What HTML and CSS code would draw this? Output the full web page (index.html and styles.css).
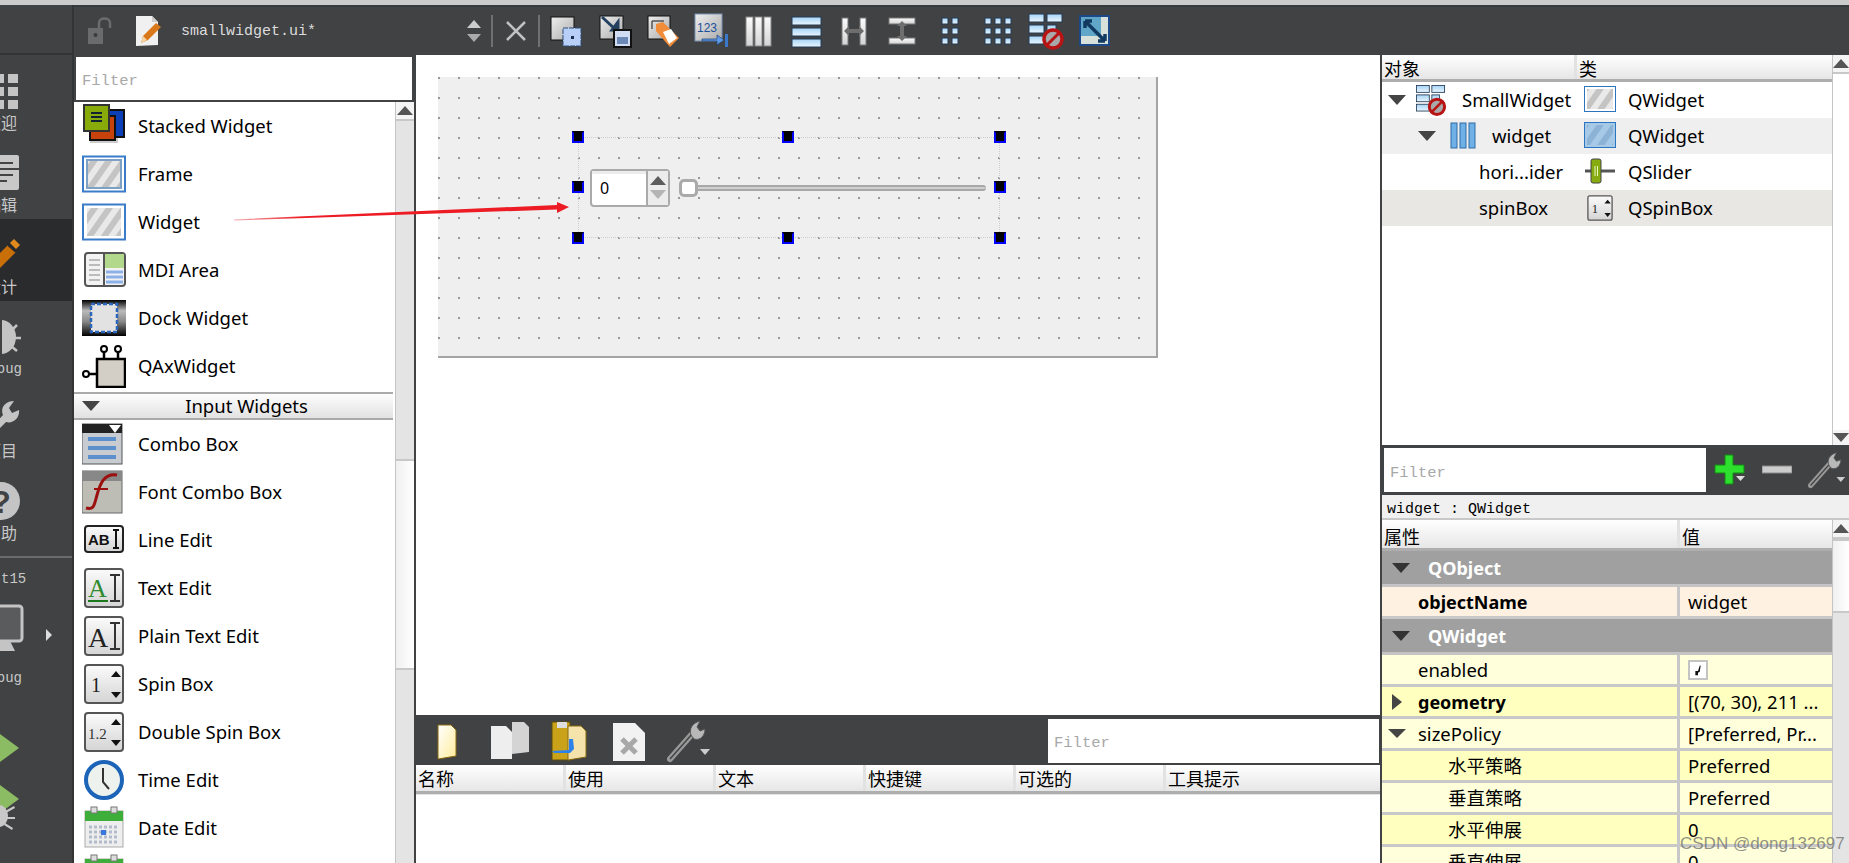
FILE: index.html
```html
<!DOCTYPE html>
<html lang="zh">
<head>
<meta charset="utf-8">
<title>smallwidget.ui - Qt Designer</title>
<link rel="stylesheet" href="styles.css">
</head>
<body>
<svg class="defs" width="0" height="0" aria-hidden="true">
  <defs>
    <pattern id="hatch" width="12" height="12" patternUnits="userSpaceOnUse" patternTransform="rotate(35)">
      <rect width="12" height="12" fill="#e9e9e9"/><rect width="6" height="12" fill="#c4c4c4"/>
    </pattern>
    <pattern id="hatchblue" width="12" height="12" patternUnits="userSpaceOnUse" patternTransform="rotate(35)">
      <rect width="12" height="12" fill="#a6c9e8"/><rect width="6" height="12" fill="#8cb3d6"/>
    </pattern>
    <linearGradient id="btn" x1="0" y1="0" x2="0" y2="1"><stop offset="0" stop-color="#fbfbfb"/><stop offset="1" stop-color="#d4d4d4"/></linearGradient>
    <linearGradient id="dockg" x1="0" y1="0" x2="0" y2="1"><stop offset="0" stop-color="#000"/><stop offset=".3" stop-color="#bbb"/><stop offset=".6" stop-color="#888"/><stop offset="1" stop-color="#000"/></linearGradient>
    <linearGradient id="barb" x1="0" y1="0" x2="0" y2="1"><stop offset="0" stop-color="#a6d4f6"/><stop offset="1" stop-color="#eaf6ff"/></linearGradient>
    <linearGradient id="gray" x1="0" y1="0" x2="1" y2="1"><stop offset="0" stop-color="#eee"/><stop offset="1" stop-color="#aaa"/></linearGradient>
    <linearGradient id="paper" x1="0" y1="0" x2="1" y2="1"><stop offset="0" stop-color="#fff"/><stop offset="1" stop-color="#ffec9c"/></linearGradient>
    <linearGradient id="redfade" x1="0" y1="0" x2="1" y2="0"><stop offset="0" stop-color="#f7b0b4"/><stop offset=".2" stop-color="#ed1c24"/></linearGradient>

    <symbol id="i-hatch-blue" viewBox="0 0 44 44"><rect x="1" y="4.500" width="42" height="35" fill="#fff" stroke="#3a7cc8" stroke-width="2"/><rect x="5" y="8" width="34" height="28" fill="url(#hatch)"/></symbol>
    <symbol id="i-spin" viewBox="0 0 44 44"><rect x="3" y="3" width="38" height="38" rx="3" fill="url(#btn)" stroke="#555" stroke-width="2"/><text x="9" y="30" class="svgserif" font-size="20" fill="#222">1</text><path d="M29 15l5-6 5 6zM29 30l5 6 5-6z" fill="#111"/></symbol>
    <symbol id="i-layoutbars" viewBox="0 0 40 40"><g fill="url(#barb)" stroke="#243a55"><rect x="6" y="6" width="29" height="8"/><rect x="6" y="17" width="29" height="8"/><rect x="6" y="28" width="29" height="8"/></g></symbol>
    <symbol id="i-wrench" viewBox="0 0 44 44"><path d="M3 40L26 14" stroke="#999" stroke-width="6" stroke-linecap="round"/><path d="M3 40L26 14" stroke="#444" stroke-width="1.500"/><path d="M24 16c-2-6 1-12 9-14l-3 6 3 4 5-2c0 7-5 12-11 10z" fill="#b8b8b8" stroke="#555"/><path d="M33 30h10l-5 6z" fill="#ccc"/></symbol>
    <symbol id="i-noform" viewBox="0 0 40 40"><g fill="url(#barb)" stroke="#243a55"><rect x="3" y="3" width="15" height="8"/><rect x="21" y="3" width="15" height="8"/><rect x="3" y="14" width="15" height="8"/><rect x="21" y="14" width="9" height="8"/><rect x="3" y="25" width="15" height="8"/></g><circle cx="27" cy="28" r="9" fill="#a9a9a9" stroke="#b81414" stroke-width="3.500"/><path d="M21 34L33 22" stroke="#b81414" stroke-width="3"/></symbol>
  </defs>
</svg>

<div class="topstrip"></div>
<div class="app">
  <nav class="modebar">
    <div class="modeinner">
      <div class="modetop"></div>
      <div class="mode">
        <svg class="modeicon" viewBox="0 0 40 40"><g fill="#c4c4c4"><rect x="1" y="3" width="9" height="9"/><rect x="14" y="3" width="9" height="9"/><rect x="27" y="3" width="10" height="9"/><rect x="1" y="16" width="9" height="9"/><rect x="14" y="16" width="9" height="9"/><rect x="27" y="16" width="10" height="9"/><rect x="1" y="29" width="9" height="9"/><rect x="14" y="29" width="9" height="9"/><rect x="27" y="29" width="10" height="9"/></g></svg>
        <span class="modelabel">欢迎</span>
      </div>
      <div class="mode">
        <svg class="modeicon" viewBox="0 0 40 40"><rect x="1" y="2" width="37" height="35" rx="2" fill="#c8c8c8"/><path d="M6 10h26M6 16h32M6 22h26M6 28h20" stroke="#444" stroke-width="2"/></svg>
        <span class="modelabel">编辑</span>
      </div>
      <div class="mode active">
        <svg class="modeicon" viewBox="0 0 40 40"><path d="M8 29L27 10l8 7-19 19-10 2z" fill="#c96f0a"/><path d="M29 8l4-4 6 6-4 4z" fill="#e08a1e"/><path d="M27 10l8 7" stroke="#2a2b2d" stroke-width="2"/></svg>
        <span class="modelabel">设计</span>
      </div>
      <div class="mode">
        <svg class="modeicon" viewBox="0 0 40 40"><ellipse cx="20" cy="20" rx="15" ry="17" fill="#c4c4c4"/><path d="M20 3v34" stroke="#404244" stroke-width="2"/><path d="M4 8l6 6M36 8l-6 6M0 21h6M40 21h-6M4 34l6-5M36 34l-6-5" stroke="#c4c4c4" stroke-width="2.500"/></svg>
        <span class="modelabel mono">Debug</span>
      </div>
      <div class="mode">
        <svg class="modeicon" viewBox="0 0 40 40"><path d="M2 38L22 16c-3-7 2-14 11-14l-5 7 3 5 7-3c1 8-6 14-13 12L8 40z" fill="#c4c4c4"/></svg>
        <span class="modelabel">项目</span>
      </div>
      <div class="mode">
        <svg class="modeicon" viewBox="0 0 40 40"><circle cx="20" cy="20" r="19" fill="#c4c4c4"/><text x="20" y="32" text-anchor="middle" class="svgsansb" font-size="32" fill="#404244">?</text></svg>
        <span class="modelabel">帮助</span>
      </div>
      <div class="modesep"></div>
      <div class="kit">
        <span class="modelabel mono kitname">test15</span>
        <svg class="kiticon" viewBox="0 0 46 48"><rect x="2" y="2" width="42" height="35" rx="3" fill="#5a5b5d" stroke="#c4c4c4" stroke-width="3"/><path d="M14 37h18l5 10H9z" fill="#c4c4c4"/></svg>
        <span class="modelabel mono">Debug</span>
      </div>
      <div class="runs">
        <svg class="runicon" viewBox="0 0 40 34"><path d="M15 0L38 17 15 34z" fill="#8bbb62"/></svg>
        <svg class="runicon2" viewBox="0 0 40 50"><path d="M15 0L38 17 15 34z" fill="#8bbb62"/><g fill="#c8c8c8"><ellipse cx="28" cy="34" rx="9" ry="11" transform="translate(-10 0)"/><path d="M24 29l9-5 1 2-9 5zM26 35h8v2h-8zM24 41l8 5-1 2-8-5z"/></g></svg>
      </div>
      <svg class="kitarrow" viewBox="0 0 8 12"><path d="M1 0l6 6-6 6z" fill="#ddd"/></svg>
    </div>
  </nav>

  <div class="main">
    <header class="toolbar">
      <svg class="t-lock" viewBox="0 0 24 28"><rect x="0" y="11" width="15" height="16" fill="#6a6b6d"/><circle cx="7.500" cy="18" r="2" fill="#3b3c3e"/><path d="M11 11V6c0-6 11-6 11 0v5" fill="none" stroke="#6a6b6d" stroke-width="2.500"/></svg>
      <svg class="t-doc" viewBox="0 0 28 32"><path d="M1 1h16l6 6v23l-22 1z" fill="#f0f0f0"/><path d="M17 1v6h6" fill="#ccc"/><path d="M6 28l2-7L21 8l5 4-13 13z" fill="#d9781a"/><path d="M6 28l2-7 4 4z" fill="#f5d5a5"/></svg>
      <span class="t-file mono">smallwidget.ui*</span>
      <svg class="t-updown" viewBox="0 0 20 32"><path d="M3 13l7-8 7 8z" fill="#ccc"/><path d="M3 19l7 8 7-8z" fill="#aaa"/></svg>
      <span class="t-sep first"></span>
      <svg class="t-x" viewBox="0 0 24 24"><path d="M3 3l18 18M21 3L3 21" stroke="#c2c2c2" stroke-width="2.500"/></svg>
      <span class="t-sep second"></span>
      <div class="t-icons">
        <svg class="t-ic" viewBox="0 0 40 40"><rect x="5" y="6" width="23" height="23" fill="url(#gray)" stroke="#111"/><rect x="17" y="17" width="18" height="18" fill="#b8d0f8" stroke="#2c4a75" stroke-dasharray="5 1"/><rect x="25" y="25" width="3" height="3" fill="#1c2f50"/></svg>
        <svg class="t-ic" viewBox="0 0 40 40"><rect x="6" y="5" width="23" height="23" fill="url(#gray)" stroke="#111"/><path d="M8 6l14 13M18 19h6v-8z" stroke="#24405f" stroke-width="3" fill="#24405f"/><rect x="20" y="19" width="17" height="17" fill="#cfdcf2" stroke="#111" stroke-width="2"/><rect x="23" y="26" width="11" height="7" fill="#6b88b6"/></svg>
        <svg class="t-ic" viewBox="0 0 40 40"><rect x="6" y="5" width="22" height="23" fill="url(#gray)" stroke="#111"/><path d="M10 10h12M10 10v8" stroke="#555" stroke-width="1.500"/><path d="M14 13l7-2 16 16-9 9-14-16z" fill="#f08c3a"/><path d="M22 19l8-3 6 9-8 6z" fill="#fff" transform="translate(-1 2)"/></svg>
        <svg class="t-ic" viewBox="0 0 40 40"><rect x="5" y="3" width="27" height="27" fill="url(#gray)" stroke="#7a93b4"/><text x="7" y="21" class="svgsans" font-size="12" fill="#1c4f9c">123</text><path d="M12 28h15v-4l7 5-7 5v-4H12z" fill="#5d9ae6" stroke="#1c3f6e" stroke-width=".7"/><rect x="35" y="23" width="3" height="13" fill="#3a78cc"/></svg>
        <svg class="t-ic" viewBox="0 0 40 40"><g fill="url(#btn)" stroke="#888"><rect x="8" y="6" width="7" height="29"/><rect x="17" y="6" width="7" height="29"/><rect x="26" y="6" width="7" height="29"/></g></svg>
        <svg class="t-ic"><use href="#i-layoutbars"/></svg>
        <svg class="t-ic" viewBox="0 0 40 40"><g fill="url(#btn)" stroke="#777"><rect x="8" y="7" width="6" height="27"/><rect x="26" y="7" width="6" height="27"/></g><path d="M10 20l5-5v3h10v-3l5 5-5 5v-3H15v3z" fill="#6e6e6e"/></svg>
        <svg class="t-ic" viewBox="0 0 40 40"><g fill="url(#btn)" stroke="#777"><rect x="7" y="7" width="26" height="6"/><rect x="7" y="27" width="26" height="6"/></g><path d="M20 10l5 5h-3v10h3l-5 5-5-5h3V15h-3z" fill="#6e6e6e"/></svg>
        <svg class="t-ic" viewBox="0 0 40 40"><g fill="url(#barb)" stroke="#243a55"><rect x="12" y="7" width="6" height="6"/><rect x="22" y="7" width="6" height="6"/><rect x="12" y="17" width="6" height="6"/><rect x="22" y="17" width="6" height="6"/><rect x="12" y="27" width="6" height="6"/><rect x="22" y="27" width="6" height="6"/></g></svg>
        <svg class="t-ic" viewBox="0 0 40 40"><g fill="url(#barb)" stroke="#243a55"><rect x="7" y="7" width="6" height="6"/><rect x="17" y="7" width="6" height="6"/><rect x="27" y="7" width="6" height="6"/><rect x="7" y="17" width="6" height="6"/><rect x="17" y="17" width="6" height="6"/><rect x="27" y="17" width="6" height="6"/><rect x="7" y="27" width="6" height="6"/><rect x="17" y="27" width="6" height="6"/><rect x="27" y="27" width="6" height="6"/></g></svg>
        <svg class="t-ic"><use href="#i-noform"/></svg>
        <svg class="t-ic" viewBox="0 0 40 40"><rect x="6" y="5" width="29" height="29" fill="#d8e0dc" stroke="#1c4a86" stroke-width="2"/><rect x="7" y="6" width="20" height="19" fill="#5fa6c8"/><path d="M11 10l20 20M11 10v7M11 10h7M31 30v-7M31 30h-7" stroke="#123a60" stroke-width="3.500" fill="none"/></svg>
      </div>
    </header>

    <div class="workspace">
      <aside class="widgetbox">
        <div class="filterbar"><span class="filter mono boxfilter">Filter</span></div>
        <div class="listwrap">
          <div class="list">
            <div class="item"><svg class="ic" viewBox="0 0 44 44"><rect x="8" y="14" width="28" height="25" fill="#000" opacity=".2"/><rect x="26" y="6" width="16" height="27" fill="#0b3fb8" stroke="#111" stroke-width="2"/><rect x="8" y="12" width="25" height="24" fill="#c8430c" stroke="#111" stroke-width="2"/><rect x="2" y="1" width="25" height="26" fill="#88ab0a" stroke="#333" stroke-width="2"/><path d="M9 9h11M9 13h11M9 17h11" stroke="#123" stroke-width="2"/></svg><span>Stacked Widget</span></div>
            <div class="item"><svg class="ic" viewBox="0 0 44 44"><rect x="1" y="4.500" width="42" height="35" fill="#fff" stroke="#3a7cc8" stroke-width="2"/><rect x="5" y="8" width="34" height="28" fill="url(#hatch)" stroke="#7ea0c4" stroke-width="2"/></svg><span>Frame</span></div>
            <div class="item"><svg class="ic"><use href="#i-hatch-blue"/></svg><span>Widget</span></div>
            <div class="item"><svg class="ic" viewBox="0 0 44 44"><rect x="3" y="5" width="40" height="33" rx="3" fill="#f2f2f2" stroke="#555" stroke-width="2"/><rect x="22" y="6" width="20" height="14" fill="#b2d88c"/><path d="M22 5v32" stroke="#555" stroke-width="2"/><path d="M7 12h11M7 17h11M7 22h11M7 27h11M7 32h11" stroke="#bbb" stroke-width="2"/><path d="M24 24h17M24 29h17M24 34h17" stroke="#8cb0e8" stroke-width="3"/></svg><span>MDI Area</span></div>
            <div class="item"><svg class="ic" viewBox="0 0 44 44"><rect y="4" width="44" height="36" fill="url(#dockg)"/><rect x="9" y="8" width="26" height="28" fill="#e2e2e2" stroke="#2c66bb" stroke-width="2.500" stroke-dasharray="4 2"/></svg><span>Dock Widget</span></div>
            <div class="item"><svg class="ic" viewBox="0 0 44 44"><rect x="15" y="15" width="28" height="28" fill="#d4cfc6" stroke="#000" stroke-width="2.500"/><path d="M22 15V8M36 15V8M15 30H7" stroke="#000" stroke-width="2.500"/><circle cx="22" cy="5" r="3" fill="#fff" stroke="#000" stroke-width="2"/><circle cx="36" cy="5" r="3" fill="#fff" stroke="#000" stroke-width="2"/><circle cx="4" cy="30" r="3" fill="#fff" stroke="#000" stroke-width="2"/></svg><span>QAxWidget</span></div>
            <div class="cathead"><i class="tri tri-down"></i><span>Input Widgets</span></div>
            <div class="item"><svg class="ic" viewBox="0 0 44 44"><rect width="40" height="40" y="2" fill="#c8ccd0" stroke="#555"/><rect width="40" height="9" y="2" fill="#222"/><path d="M27 3h12l-6 8z" fill="#fff"/><path d="M6 17h28M6 26h28M6 35h28" stroke="#5b90cc" stroke-width="4"/></svg><span>Combo Box</span></div>
            <div class="item"><svg class="ic" viewBox="0 0 44 44"><rect width="40" height="42" y="1" fill="#bdbdb5" stroke="#666"/><rect width="40" height="10" y="1" fill="#888"/><path d="M4 38c8 2 8-2 11-13 3-11 7-22 20-20" fill="none" stroke="#9c0f0f" stroke-width="3"/><path d="M12 19h14" stroke="#9c0f0f" stroke-width="2"/></svg><span>Font Combo Box</span></div>
            <div class="item"><svg class="ic" viewBox="0 0 44 44"><rect x="3" y="8" width="38" height="26" rx="3" fill="url(#btn)" stroke="#222" stroke-width="2"/><text x="6" y="27" class="svgsansb" font-size="15" fill="#111">AB</text><path d="M31 12h6M31 30h6M34 12v18" stroke="#111" stroke-width="2"/></svg><span>Line Edit</span></div>
            <div class="item"><svg class="ic" viewBox="0 0 44 44"><rect x="3" y="3" width="38" height="38" rx="3" fill="url(#btn)" stroke="#555" stroke-width="2"/><text x="6" y="31" class="svgserif" font-size="26" fill="#2d8a2d">A</text><path d="M6 35h20" stroke="#1c7a1c" stroke-width="2"/><path d="M28 9h10M28 35h10M33 9v26" stroke="#333" stroke-width="2"/></svg><span>Text Edit</span></div>
            <div class="item"><svg class="ic" viewBox="0 0 44 44"><rect x="3" y="3" width="38" height="38" rx="3" fill="url(#btn)" stroke="#555" stroke-width="2"/><text x="6" y="33" class="svgserif" font-size="28" fill="#222">A</text><path d="M28 9h10M28 35h10M33 9v26" stroke="#333" stroke-width="2"/></svg><span>Plain Text Edit</span></div>
            <div class="item"><svg class="ic"><use href="#i-spin"/></svg><span>Spin Box</span></div>
            <div class="item"><svg class="ic" viewBox="0 0 44 44"><rect x="3" y="3" width="38" height="38" rx="3" fill="url(#btn)" stroke="#555" stroke-width="2"/><text x="6" y="29" class="svgserif" font-size="15" fill="#333">1.2</text><path d="M29 15l5-6 5 6zM29 30l5 6 5-6z" fill="#111"/></svg><span>Double Spin Box</span></div>
            <div class="item"><svg class="ic" viewBox="0 0 44 44"><circle cx="22" cy="22" r="18" fill="#eef2ee" stroke="#1c64b8" stroke-width="4"/><path d="M21 10v14l6 7" fill="none" stroke="#333" stroke-width="2"/></svg><span>Time Edit</span></div>
            <div class="item"><svg class="ic" viewBox="0 0 44 44"><rect x="3" y="5" width="38" height="36" fill="#eee" stroke="#aaa"/><rect x="3" y="5" width="38" height="10" fill="#3eae3a"/><rect x="9" y="1" width="6" height="6" fill="#ddd" stroke="#777"/><rect x="29" y="1" width="6" height="6" fill="#ddd" stroke="#777"/><path d="M7 21h30M7 26h30M7 31h30M7 36h30" stroke="#b4bccb" stroke-width="3" stroke-dasharray="3 2"/><rect x="19" y="24" width="5" height="5" fill="#3a78dc"/></svg><span>Date Edit</span></div>
            <div class="item"><svg class="ic" viewBox="0 0 44 44"><rect x="3" y="5" width="38" height="36" fill="#eee" stroke="#aaa"/><rect x="3" y="5" width="38" height="10" fill="#3eae3a"/><rect x="9" y="1" width="6" height="6" fill="#ddd" stroke="#777"/><rect x="29" y="1" width="6" height="6" fill="#ddd" stroke="#777"/></svg></div>
          </div>
          <div class="scroll boxscroll"><div class="sb-up"><i class="tri tri-up"></i></div><div class="sb-track a"></div><div class="sb-thumb"></div><div class="sb-track"></div></div>
        </div>
      </aside>

      <section class="center">
        <div class="canvas">
          <div class="form">
            <div class="selection"></div>
            <i class="handle h-tl"></i><i class="handle h-tc"></i><i class="handle h-tr"></i>
            <i class="handle h-ml"></i><i class="handle h-mr"></i>
            <i class="handle h-bl"></i><i class="handle h-bc"></i><i class="handle h-br"></i>
            <div class="spinbox"><span class="spinval">0</span><span class="spinbtns"><i class="tri spin-up"></i><i class="tri spin-down"></i></span></div>
            <div class="slider"><i class="slider-handle"></i><i class="slider-track"></i></div>
          </div>
        </div>
        <div class="actions">
          <div class="actionbar">
            <svg class="a-new" viewBox="0 0 22 40"><path d="M2 4h13l5 5v26L2 38z" fill="url(#paper)" stroke="#8a6a10"/></svg>
            <svg class="a-multi" viewBox="0 0 40 40"><path d="M22 1h12l5 5v25l-17 2z" fill="#d4d4d4"/><path d="M1 5h15l6 6v27L1 38z" fill="#eee"/></svg>
            <svg class="a-open" viewBox="0 0 36 42"><rect x="1" y="2" width="18" height="38" fill="#c9a21a" stroke="#5d4a08"/><rect x="6" y="2" width="10" height="6" fill="#ddd"/><path d="M17 6h13l5 5v26l-18 3z" fill="#f5e3ac" stroke="#8a6a10"/><path d="M1 31l17-1V19h4l1 10-4 4H3z" fill="#2c82e8"/></svg>
            <svg class="a-del" viewBox="0 0 32 40"><path d="M0 2h22l10 10v28H0z" fill="#f2f2f2"/><path d="M9 18l14 14M23 18L9 32" stroke="#a8a8a8" stroke-width="5"/></svg>
            <svg class="a-wrench"><use href="#i-wrench"/></svg>
            <div class="spacer"></div>
            <div class="actfilter"><span class="filter mono">Filter</span></div>
          </div>
          <div class="colhead actcols"><span>名称</span><span>使用</span><span>文本</span><span>快捷键</span><span>可选的</span><span>工具提示</span></div>
          <div class="actbody"></div>
        </div>
      </section>

      <aside class="right">
        <div class="inspector">
          <div class="treewrap">
            <div class="tree">
              <div class="colhead treecols"><span>对象</span><span>类</span></div>
              <div class="trow">
                <div class="tname"><i class="tri tri-down t0"></i><svg class="tic"><use href="#i-noform"/></svg><span class="n0">SmallWidget</span></div>
                <div class="tclass"><svg class="cic" viewBox="0 0 32 28"><rect x=".5" y=".5" width="31" height="25" fill="#fff" stroke="#2b74c0"/><rect x="3" y="3" width="26" height="20" fill="url(#hatch)"/></svg><span>QWidget</span></div>
              </div>
              <div class="trow alt">
                <div class="tname"><i class="tri tri-down t1"></i><svg class="tic2" viewBox="0 0 28 28"><g fill="#6fb0e6" stroke="#2e6ca8"><rect x="1" y="1" width="6" height="25"/><rect x="10" y="1" width="6" height="25"/><rect x="19" y="1" width="6" height="25"/></g></svg><span class="n1">widget</span></div>
                <div class="tclass"><svg class="cic" viewBox="0 0 32 28"><rect x=".5" y=".5" width="31" height="25" fill="#a6c9e8" stroke="#2b74c0"/><rect x="3" y="3" width="26" height="20" fill="url(#hatchblue)"/></svg><span>QWidget</span></div>
              </div>
              <div class="trow">
                <div class="tname"><span class="n2">hori...ider</span></div>
                <div class="tclass"><svg class="cic" viewBox="0 0 32 28"><path d="M1 13h30" stroke="#555" stroke-width="3"/><rect x="7" y="1" width="10" height="24" rx="2" fill="#86ac10" stroke="#444"/><path d="M11 8v10M13.500 8v10" stroke="#eaf5c0"/></svg><span>QSlider</span></div>
              </div>
              <div class="trow sel">
                <div class="tname"><span class="n2">spinBox</span></div>
                <div class="tclass"><svg class="cic spinic"><use href="#i-spin"/></svg><span>QSpinBox</span></div>
              </div>
            </div>
            <div class="scroll treescroll"><div class="sb-up"><i class="tri tri-up"></i></div><div class="sb-white"></div><div class="sb-down"><i class="tri tri-downsb"></i></div></div>
          </div>
          <div class="propbar">
            <div class="propfilter"><span class="filter mono">Filter</span></div>
            <svg class="p-plus" viewBox="0 0 32 32"><path d="M11 1h8v10h11v8H19v11h-8V19H1v-8h10z" fill="#2ee02e" stroke="#128a12"/><path d="M22 22h9l-4.500 5z" fill="#ddd"/></svg>
            <svg class="p-minus" viewBox="0 0 30 12"><rect x="0" y="2" width="30" height="7" fill="#ccc" stroke="#888"/></svg>
            <svg class="p-wrench"><use href="#i-wrench"/></svg>
          </div>
          <div class="objline mono">widget : QWidget</div>
          <div class="propwrap">
            <div class="props">
              <div class="colhead propcols"><span>属性</span><span>值</span></div>
              <div class="group"><i class="tri tri-dark"></i><span>QObject</span></div>
              <div class="prow peach"><div class="pk bold">objectName</div><div class="pv">widget</div></div>
              <div class="group"><i class="tri tri-dark"></i><span>QWidget</span></div>
              <div class="prow y1"><div class="pk">enabled</div><div class="pv"><i class="check"><svg viewBox="0 0 18 18"><path d="M6 10l3 0 0 5-3 0zM9 10l2-6 1 0-1 7-2 1z" fill="#111"/></svg></i></div></div>
              <div class="prow y2"><div class="pk bold"><i class="tri tri-right"></i>geometry</div><div class="pv">[(70, 30), 211 ...</div></div>
              <div class="prow y1"><div class="pk"><i class="tri tri-small"></i>sizePolicy</div><div class="pv">[Preferred, Pr...</div></div>
              <div class="prow y2"><div class="pk sub">水平策略</div><div class="pv">Preferred</div></div>
              <div class="prow y1"><div class="pk sub">垂直策略</div><div class="pv">Preferred</div></div>
              <div class="prow y2"><div class="pk sub">水平伸展</div><div class="pv">0</div></div>
              <div class="prow y1"><div class="pk sub">垂直伸展</div><div class="pv">0</div></div>
            </div>
            <div class="scroll propscroll"><div class="sb-up"><i class="tri tri-up"></i></div><div class="sb-thumb short"></div><div class="sb-track"></div></div>
          </div>
        </div>
      </aside>
    </div>
  </div>
</div>

<svg class="arrow" viewBox="0 0 1849 863" aria-hidden="true"><path d="M234 219.500L557 205V202L569 207 557 213V209.500L234 220.500z" fill="url(#redfade)"/></svg>
<div class="watermark">CSDN @dong132697</div>
</body>
</html>
```

FILE: styles.css
```css
* { box-sizing: border-box; }
html, body { margin: 0; padding: 0; }
body {
  width: 1849px; height: 863px; overflow: hidden; position: relative;
  background: #404244; color: #000;
  font-family: "Noto Sans", "Noto Sans CJK SC", sans-serif; font-size: 18.5px;
  display: flex; flex-direction: column;
}
i { display: block; font-style: normal; }
svg { display: block; flex: none; }
.defs { position: absolute; }
.mono { font-family: "Liberation Mono", "Noto Sans CJK SC", monospace; }
.svgserif { font-family: "Liberation Serif", serif; }
.svgsans { font-family: "Liberation Sans", sans-serif; }
.svgsansb { font-family: "Liberation Sans", sans-serif; font-weight: 700; }

.topstrip { height: 5px; background: #cbcbcb; flex: none; }
.app { display: flex; height: 858px; }

/* left mode bar */
.modebar { width: 74px; flex: none; overflow: hidden; border-right: 2px solid #333436; background: #404244; position: relative; }
.modeinner { width: 107px; margin-left: -35px; }
.modetop { height: 50px; border-bottom: 2px solid #333436; }
.mode { height: 82px; padding: 16px 35px 0 0; display: flex; flex-direction: column; align-items: center; }
.mode.active { background: #2a2b2d; }
.modeicon { width: 40px; height: 40px; }
.modelabel { color: #c8c8c8; font-size: 16px; line-height: 24px; white-space: nowrap; }
.modelabel.mono { font-size: 14px; }
.modesep { height: 2px; margin-top: 9px; background: #6a6b6d; }
.kit { padding: 9px 35px 0 0; display: flex; flex-direction: column; align-items: center; }
.kitname { line-height: 24px; }
.kiticon { width: 46px; height: 48px; margin-top: 13px; }
.kit .modelabel:last-child { margin-top: 14px; }
.kitarrow { position: absolute; left: 45px; top: 624px; width: 8px; height: 12px; }
.runs { padding: 41px 35px 0 0; display: flex; flex-direction: column; align-items: center; }
.runicon { width: 40px; height: 34px; }
.runicon2 { width: 40px; height: 50px; margin-top: 17px; }

/* main toolbar */
.main { flex: 1; display: flex; flex-direction: column; min-width: 0; }
.toolbar { height: 50px; flex: none; background: #404244; border-top: 2px solid #38393b; display: flex; align-items: center; padding-left: 14px; }
.t-lock { width: 24px; height: 28px; margin-right: 23px; }
.t-doc { width: 28px; height: 32px; margin-right: 18px; }
.t-file { width: 283px; color: #dcdcdc; font-size: 15px; white-space: nowrap; }
.t-updown { width: 20px; height: 32px; }
.t-sep { width: 2px; height: 32px; background: #6f7072; }
.t-sep.first { margin-left: 7px; }
.t-x { width: 24px; height: 24px; margin-left: 11px; }
.t-sep.second { margin-left: 10px; }
.t-icons { display: flex; margin-left: 2px; }
.t-ic { width: 48px; height: 40px; }

.workspace { flex: 1; display: flex; min-height: 0; }

/* widget box */
.widgetbox { width: 342px; flex: none; background: #fff; border-right: 2px solid #404244; display: flex; flex-direction: column; overflow: hidden; }
.filterbar { height: 47px; flex: none; background: #404244; padding: 2px; }
.filterbar .boxfilter { display: flex; height: 43px; align-items: center; background: #fff; padding: 5px 0 0 6px; width: 336px; }
.filter { color: #a8a8a8; font-size: 15.500px; }
.listwrap { flex: 1; display: flex; min-height: 0; }
.list { width: 321px; flex: none; overflow: hidden; }
.item { height: 48px; display: flex; align-items: center; gap: 12px; padding-left: 8px; white-space: nowrap; }
.item span { padding-bottom: 2px; }
.ic { width: 44px; height: 44px; }
.cathead { height: 28px; margin: 2px 2px 0 0; border-top: 2px solid #aaa; border-bottom: 2px solid #aaa; background: linear-gradient(#fdfdfd, #e2e2e2); display: flex; align-items: center; padding-left: 8px; }
.cathead span { flex: 1; text-align: center; line-height: 24px; }

.tri { width: 0; height: 0; border-style: solid; border-color: transparent; }
.tri-down { border-width: 10px 9px 0; border-top-color: #444; }
.tri-up { border-width: 0 8px 9px; border-bottom-color: #555; }
.tri-downsb { border-width: 9px 8px 0; border-top-color: #555; }
.tri-dark { border-width: 10px 9px 0; border-top-color: #333; }
.tri-right { border-width: 8px 0 8px 10px; border-left-color: #444; position: absolute; left: 10px; }
.tri-small { border-width: 9px 9px 0; border-top-color: #444; position: absolute; left: 6px; }

.scroll { width: 19px; flex: none; display: flex; flex-direction: column; background: #e4e4e4; border-left: 1px solid #c4c4c4; overflow: hidden; }
.sb-up { height: 19px; flex: none; display: flex; align-items: center; justify-content: center; background: #f4f4f4; border-bottom: 2px solid #c8c8c8; }
.sb-down { height: 15px; flex: none; display: flex; align-items: center; justify-content: center; background: #f4f4f4; }
.sb-track { flex: 1; }
.sb-track.a { flex: none; height: 338px; }
.sb-thumb { height: 211px; flex: none; background: linear-gradient(90deg, #f0f0f0, #fff); border-top: 2px solid #c8c8c8; border-bottom: 2px solid #c8c8c8; }
.sb-thumb.short { height: 74px; }
.sb-white { flex: 1; background: #fff; }

/* center */
.center { width: 964px; flex: none; display: flex; flex-direction: column; background: #fff; }
.canvas { height: 660px; flex: none; padding: 22px 0 0 22px; }
.form {
  position: relative; width: 720px; height: 281px;
  border-right: 2px solid #a4a4a4; border-bottom: 2px solid #a4a4a4;
  background-color: #efefef;
  background-image: radial-gradient(circle at 1px 1px, #999 1px, transparent 1px);
  background-size: 20px 20px;
}
.selection { position: absolute; left: 140px; top: 60px; width: 422px; height: 101px; border: 1px dotted #cfcfcf; }
.handle { position: absolute; width: 12px; height: 12px; background: #000; border: 2px solid #00f; border-top-color: #000; }
.h-tl { left: 134px; top: 54px; } .h-tc { left: 344px; top: 54px; } .h-tr { left: 556px; top: 54px; }
.h-ml { left: 134px; top: 104px; } .h-mr { left: 556px; top: 104px; }
.h-bl { left: 134px; top: 155px; } .h-bc { left: 344px; top: 155px; } .h-br { left: 556px; top: 155px; }
.spinbox { position: absolute; left: 152px; top: 92px; width: 80px; height: 38px; background: #fff; border: 2px solid #aaa; border-radius: 4px; display: flex; }
.spinbox::before { content: ""; position: absolute; left: 0; top: 0; right: 22px; height: 3px; background: #ececec; }
.spinval { width: 56px; padding-left: 8px; font-size: 16px; line-height: 34px; border-right: 2px solid #aaa; flex: none; }
.spinbtns { flex: 1; background: #ececec; display: flex; flex-direction: column; align-items: center; gap: 5px; padding-top: 5px; }
.spin-up { border-width: 0 8px 9px; border-bottom-color: #5c5c5c; }
.spin-down { border-width: 9px 8px 0; border-top-color: #b4b4b4; }
.slider { position: absolute; left: 241px; top: 102px; width: 307px; height: 18px; display: flex; align-items: center; }
.slider-handle { width: 19px; height: 18px; border: 3px solid #aaa; border-radius: 5px; background: #fff; flex: none; }
.slider-track { flex: 1; height: 6px; background: #d0d0d0; border-radius: 0 3px 3px 0; border-top: 2px solid #a8a8a8; border-bottom: 2px solid #a8a8a8; }

.actions { flex: 1; display: flex; flex-direction: column; min-height: 0; }
.actionbar { height: 50px; flex: none; background: #404244; display: flex; align-items: center; padding: 2px 1px 0 0; }
.a-new { width: 22px; height: 40px; margin-left: 20px; }
.a-multi { width: 40px; height: 40px; margin-left: 32px; }
.a-open { width: 36px; height: 42px; margin-left: 21px; }
.a-del { width: 32px; height: 40px; margin-left: 26px; }
.a-wrench { width: 44px; height: 44px; margin-left: 22px; }
.spacer { flex: 1; }
.actfilter { width: 331px; height: 44px; background: #fff; display: flex; align-items: center; padding: 4px 0 0 6px; }
.colhead { display: flex; flex: none; background: linear-gradient(#fff, #e6e6e6); border-bottom: 3px solid #aeaeae; font-size: 18px; white-space: nowrap; }
.colhead span { display: block; padding-left: 2px; border-right: 3px solid #e2e2e2; line-height: 28px; }
.colhead span:last-child { border-right: 0; flex: 1; }
.actcols { height: 29px; }
.actcols span { width: 150px; }
.actbody { flex: 1; background: #fff; border-top: 1px solid #e4e4e4; }

/* right */
.right { width: 469px; flex: none; border-left: 2px solid #404244; background: #fff; min-width: 0; }
.inspector { display: flex; flex-direction: column; height: 100%; }
.treewrap { height: 390px; flex: none; display: flex; }
.tree { width: 450px; flex: none; }
.treecols { height: 27px; }
.treecols span:first-child { width: 195px; }
.trow { height: 36px; display: flex; align-items: center; white-space: nowrap; }
.trow span { padding-bottom: 2px; }
.trow.alt { background: #efefef; }
.trow.sel { background: #e8e7e4; }
.tname { width: 195px; flex: none; display: flex; align-items: center; position: relative; }
.t0 { margin-left: 6px; }
.t1 { margin-left: 36px; }
.tic { width: 34px; height: 34px; margin-left: 8px; }
.tic2 { width: 28px; height: 28px; margin-left: 14px; }
.n0 { margin-left: 14px; }
.n1 { margin-left: 14px; }
.n2 { margin-left: 97px; }
.tclass { display: flex; align-items: center; padding-left: 7px; }
.tclass span { margin-left: 12px; }
.cic { width: 32px; height: 28px; }
.treescroll { width: 17px; }

.propbar { height: 50px; flex: none; background: #404244; display: flex; align-items: center; padding-left: 2px; }
.propfilter { width: 322px; height: 44px; background: #fff; display: flex; align-items: center; padding: 5px 0 0 6px; }
.p-plus { width: 32px; height: 32px; margin-left: 8px; }
.p-minus { width: 30px; height: 12px; margin-left: 16px; }
.p-wrench { width: 38px; height: 38px; margin-left: 16px; }
.objline { height: 25px; flex: none; background: #f0f0f0; border-bottom: 2px solid #c8c8c8; padding: 3px 0 0 5px; font-size: 15px; line-height: 23px; }
.propwrap { flex: 1; display: flex; min-height: 0; overflow: hidden; }
.props { width: 450px; flex: none; }
.propcols { height: 31px; }
.propcols span:first-child { width: 298px; }
.propcols span { line-height: 34px; }
.group { height: 36px; background: #a0a0a0; border-bottom: 3px solid #c4c4c4; color: #fff; font-weight: 700; font-size: 18px; display: flex; align-items: center; padding-left: 10px; }
.group span { margin-left: 18px; }
.prow { height: 32px; display: flex; border-bottom: 3px solid #c8c8c8; white-space: nowrap; line-height: 28px; }
.peach { background: #fff1e1; }
.y1 { background: #ffffdc; }
.y2 { background: #ffffbf; }
.pk { width: 298px; flex: none; padding-left: 36px; border-right: 3px solid #c8c8c8; position: relative; display: flex; align-items: center; }
.pk.bold { font-weight: 700; font-size: 18px; }
.pk.sub { padding-left: 66px; }
.pv { padding-left: 8px; display: flex; align-items: center; }
.check { width: 20px; height: 20px; background: #fff; border: 2px solid #c4c4c4; }
.propscroll { width: 17px; }

.arrow { position: absolute; left: 0; top: 0; width: 1849px; height: 863px; pointer-events: none; }
.watermark { position: absolute; left: 1680px; top: 832px; color: rgba(110, 110, 110, .75); font-family: "Liberation Sans", sans-serif; font-size: 17px; line-height: 24px; white-space: nowrap; }
```
